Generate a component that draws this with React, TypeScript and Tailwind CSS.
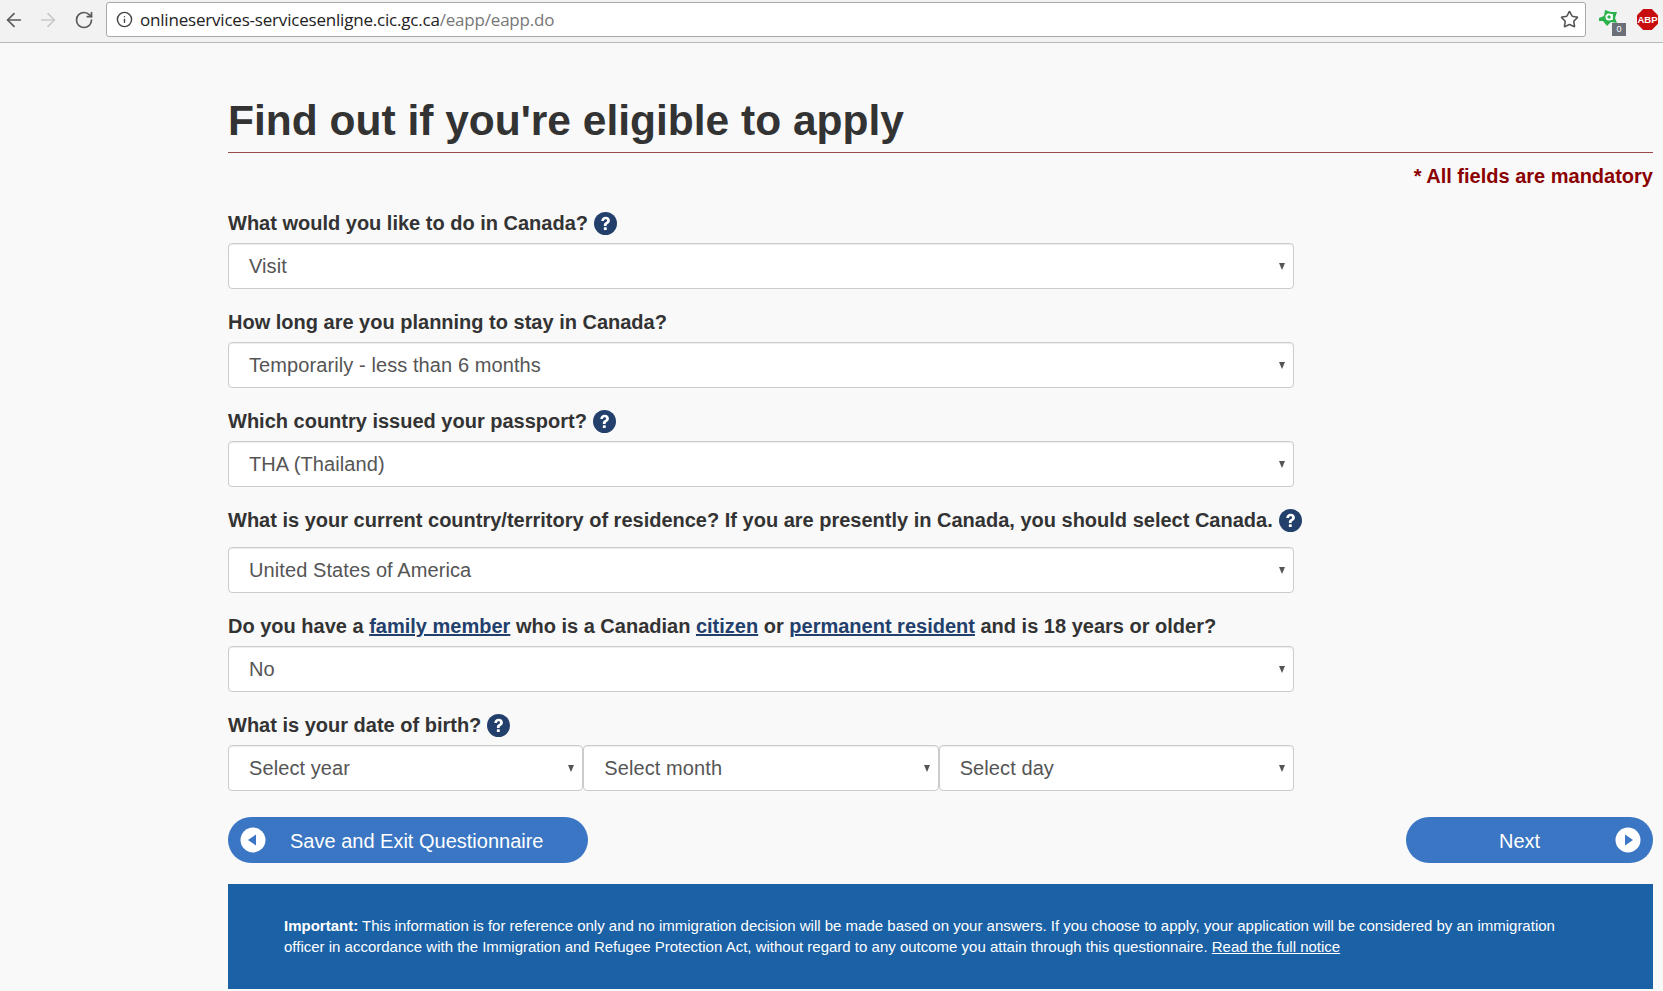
import React from 'react';
import { ArrowLeft, ArrowRight, RotateCw, Info, Star } from 'lucide-react';

function Help() {
  return (
    <svg viewBox="0 0 24 24" className="w-[23px] h-[23px] shrink-0 ml-[6px]">
      <circle cx="12" cy="12" r="12" fill="#23406c" />
      <path d="M7.6 9.4C7.6 6.8 9.6 5 12.2 5c2.6 0 4.4 1.5 4.4 3.8 0 1.7-.9 2.6-2.1 3.4-1 .6-1.3 1.1-1.3 2v.4h-2.9v-.6c0-1.6.6-2.4 1.8-3.2 1-.6 1.5-1.1 1.5-1.9 0-.9-.6-1.4-1.5-1.4-1 0-1.7.7-1.7 1.9H7.6z" fill="#fff" />
      <rect x="10.3" y="15.8" width="3" height="3" rx=".4" fill="#fff" />
    </svg>
  );
}

function Select({ value, className = '' }: { value: string; className?: string }) {
  return (
    <div className={`relative h-[46px] min-w-0 ${className}`}>
      <select
        defaultValue={value}
        className="w-full h-full appearance-none bg-white border border-[#cccccc] rounded-[4px] pl-[20px] pr-[30px] text-[20px] tracking-[0.09px] text-[#555555] shadow-[inset_0_1px_1px_rgba(0,0,0,0.075)] outline-none"
      >
        <option>{value}</option>
      </select>
      <span className="absolute right-[9px] top-[20px] w-0 h-0 border-x-[3.5px] border-x-transparent border-t-[7px] border-t-[#555555]" />
    </div>
  );
}

function Label({ children, help }: { children: React.ReactNode; help?: boolean }) {
  return (
    <div className="flex items-center h-[30px] pb-[2px] text-[20px] font-bold text-[#333333] whitespace-nowrap">
      <span>{children}</span>
      {help && <Help />}
    </div>
  );
}

function TermLink({ children }: { children: React.ReactNode }) {
  return <a className="text-[#23406c] underline">{children}</a>;
}

function RoundIcon({ dir }: { dir: 'left' | 'right' }) {
  return (
    <svg viewBox="0 0 26 26" className="w-[26px] h-[26px] shrink-0">
      <circle cx="13" cy="13" r="12.5" fill="#fff" />
      {dir === 'left' ? (
        <path d="M8 13l8-5.5v11z" fill="#3a76c3" />
      ) : (
        <path d="M18 13l-8-5.5v11z" fill="#3a76c3" />
      )}
    </svg>
  );
}

export default function App() {
  return (
    <div className="w-full h-[991px] overflow-hidden bg-[#f9f9f9] font-['Liberation_Sans',Arial,sans-serif]">
      {/* Browser toolbar */}
      <div className="h-[43px] bg-[#f2f2f2] border-b border-[#b9b9b9] flex items-center">
        <div className="flex items-center w-[106px] pl-[3px] mb-[3px]">
          <ArrowLeft className="w-[22px] h-[22px] text-[#5a5a5a]" strokeWidth={1.8} />
          <ArrowRight className="w-[22px] h-[22px] text-[#c9c9c9] ml-[12px]" strokeWidth={1.8} />
          <RotateCw className="w-[20px] h-[20px] text-[#5a5a5a] ml-[15px]" strokeWidth={2} />
        </div>
        <div className="w-[1480px] h-[35px] mb-[4px] bg-white border border-[#a9a9a9] rounded-[3px] flex items-center pl-[9px] pr-[6px]">
          <Info className="w-[17px] h-[17px] text-[#444444]" strokeWidth={2} />
          <div className="ml-[7px] pt-[2px] flex-1 text-[17px] text-[#222222] font-['Open_Sans',sans-serif] tracking-[-0.2px]">
            onlineservices-servicesenligne.cic.gc.ca<span className="text-[#777777]">/eapp/eapp.do</span>
          </div>
          <Star className="w-[19px] h-[19px] text-[#555555]" strokeWidth={2} />
        </div>
        <div className="relative flex-1 h-full">
          <svg viewBox="0 0 20 18" className="absolute left-[12px] top-[9px] w-[20px] h-[18px]">
            <path d="M1 9l5-2 1-6 6 2 6 0-2 6 2 5-6-1-4 4-4-5-4 0z" fill="#2bb24c" />
            <circle cx="11" cy="8" r="2.6" fill="none" stroke="#fff" strokeWidth="1.8" />
            <rect x="13" y="5" width="1.8" height="6" fill="#fff" />
          </svg>
          <span className="absolute left-[26px] top-[23px] w-[14px] h-[13px] bg-[#6b6f78] text-white text-[9px] leading-[13px] text-center">0</span>
          <svg viewBox="0 0 22 22" className="absolute left-[51px] top-[9px] w-[21px] h-[21px]">
            <path d="M6.5 0h9L22 6.5v9L15.5 22h-9L0 15.5v-9z" fill="#c70d0d" />
            <text x="11" y="15" textAnchor="middle" fontSize="10" fontWeight="700" fill="#fff" fontFamily="Liberation Sans">ABP</text>
          </svg>
        </div>
      </div>

      {/* Page */}
      <div className="ml-[228px] mr-[10px]">
        <h1 className="h-[110px] pt-[52px] text-[42.5px] leading-[52px] font-bold text-[#333333] border-b border-[#9a4a4a] box-border whitespace-nowrap">
          Find out if you're eligible to apply
        </h1>
        <p className="h-[56px] pt-[11px] text-right text-[20px] leading-[24px] font-bold text-[#8b0000]">* All fields are mandatory</p>

        <div className="w-[1066px]">
          <Label help>What would you like to do in Canada?</Label>
          <Select value="Visit" className="mt-[4px]" />

          <div className="mt-[19px]"><Label>How long are you planning to stay in Canada?</Label></div>
          <Select value="Temporarily - less than 6 months" className="mt-[4px]" />

          <div className="mt-[19px]"><Label help>Which country issued your passport?</Label></div>
          <Select value="THA (Thailand)" className="mt-[4px]" />

          <div className="mt-[19px]"><Label help>What is your current country/territory of residence? If you are presently in Canada, you should select Canada.</Label></div>
          <Select value="United States of America" className="mt-[11px]" />

          <div className="mt-[19px]">
            <Label>
              Do you have a <TermLink>family member</TermLink> who is a Canadian <TermLink>citizen</TermLink> or{' '}
              <TermLink>permanent resident</TermLink> and is 18 years or older?
            </Label>
          </div>
          <Select value="No" className="mt-[4px]" />

          <div className="mt-[19px]"><Label help>What is your date of birth?</Label></div>
          <div className="mt-[4px] grid grid-cols-3">
            <Select value="Select year" />
            <Select value="Select month" />
            <Select value="Select day" />
          </div>
        </div>

        <div className="mt-[26px] flex justify-between">
          <button className="w-[360px] h-[46px] rounded-full bg-[#3a76c3] text-white text-[20px] flex items-center pl-[12px]">
            <RoundIcon dir="left" />
            <span className="ml-[24px] pt-[2px]">Save and Exit Questionnaire</span>
          </button>
          <button className="relative w-[247px] h-[46px] rounded-full bg-[#3a76c3] text-white text-[20px] flex items-center justify-center pr-[20px]">
            <span className="pt-[2px]">Next</span>
            <span className="absolute right-[0px] top-[10px] pr-[12px] flex"><RoundIcon dir="right" /></span>
          </button>
        </div>

        <div className="mt-[21px] h-[105px] bg-[#1a61a6] text-white text-[15px] leading-[21px] pl-[56px] pr-[80px] pt-[31px]">
          <b>Important:</b> This information is for reference only and no immigration decision will be made based on your answers. If you choose to apply, your application will be considered by an immigration officer in accordance with the Immigration and Refugee Protection Act, without regard to any outcome you attain through this questionnaire.{' '}
          <a className="underline">Read the full notice</a>
        </div>
      </div>
    </div>
  );
}
